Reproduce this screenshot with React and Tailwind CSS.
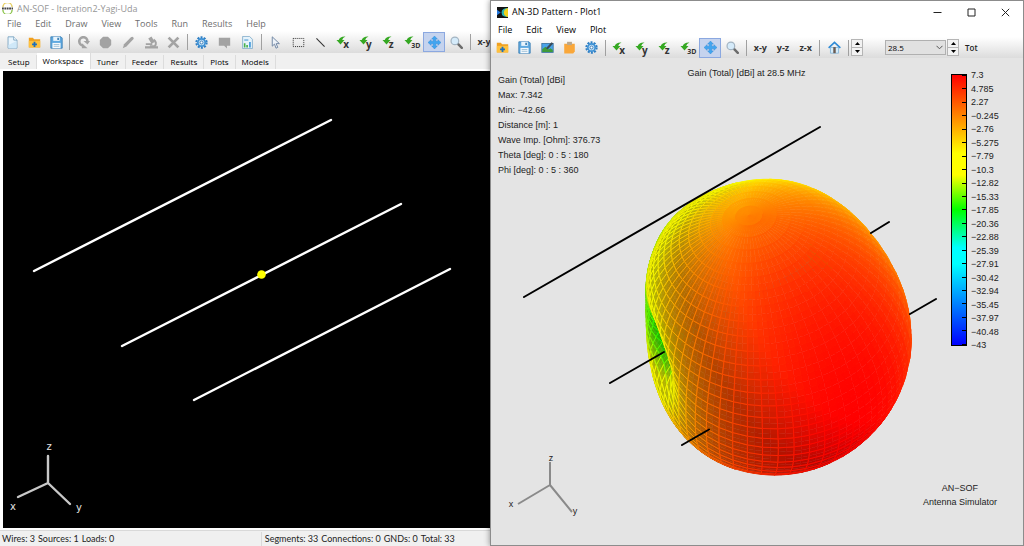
import { useMemo, useState } from "react";
import clsx from "clsx";

const LEFT_MENU = ["File", "Edit", "Draw", "View", "Tools", "Run", "Results", "Help"];
const RIGHT_MENU = ["File", "Edit", "View", "Plot"];
const TABS = ["Setup", "Workspace", "Tuner", "Feeder", "Results", "Plots", "Models"];

const INFO = [
  "Gain (Total) [dBi]",
  "Max: 7.342",
  "Min: −42.66",
  "Distance [m]: 1",
  "Wave Imp. [Ohm]: 376.73",
  "Theta [deg]: 0 : 5 : 180",
  "Phi [deg]: 0 : 5 : 360",
];

const SCALE = [
  "7.3", "4.785", "2.27", "−0.245", "−2.76", "−5.275", "−7.79", "−10.3", "−12.82", "−15.33", "−17.85",
  "−20.36", "−22.88", "−25.39", "−27.91", "−30.42", "−32.94", "−35.45", "−37.97", "−40.48", "−43",
];

/* ---------- radiation pattern ---------- */

const G_MAX = 7.342;
const G_MIN = -43;
const RADIUS = 184;
const ORIGIN = [749, 300];
const RIGHT = [-0.825, 0.566, 0];
const DOWN = [0.476, 0.694, -0.54];
const VIEW = [0.306, 0.446, 0.841];
const LIGHT = [0.7, -0.38, 0.6];

// amplitude, phase (deg) and position (deg along the boom) of each element
const ELEMENTS = [
  [0.45, 112, -70],
  [1, 0, 0],
  [0.45, -112, 54],
];

const STOPS = [
  [0, [255, 0, 0]],
  [0.29, [255, 255, 0]],
  [0.37, [255, 255, 0]],
  [0.5, [0, 255, 0]],
  [0.64, [0, 255, 255]],
  [0.7, [0, 255, 255]],
  [1, [0, 0, 255]],
];

const dot = (a, b) => a[0] * b[0] + a[1] * b[1] + a[2] * b[2];
const rad = (deg) => (deg * Math.PI) / 180;

function field(u) {
  let re = 0;
  let im = 0;
  ELEMENTS.forEach(([amp, phase, pos]) => {
    const a = rad(phase + pos * u[1]);
    re += amp * Math.cos(a);
    im += amp * Math.sin(a);
  });
  const sin = Math.sqrt(Math.max(1e-9, 1 - u[0] * u[0]));
  return Math.hypot(re, im) * Math.abs(Math.cos((Math.PI / 2) * u[0]) / sin);
}

function colorOf(gain) {
  const t = Math.min(1, Math.max(0, (G_MAX - gain) / (G_MAX - G_MIN)));
  const i = Math.max(1, STOPS.findIndex(([s]) => s >= t));
  const [t0, c0] = STOPS[i - 1];
  const [t1, c1] = STOPS[i];
  const f = (t - t0) / (t1 - t0);
  return c0.map((c, k) => c + (c1[k] - c) * f);
}

const css = (c, shade = 1) => `rgb(${c.map((v) => Math.round(v * shade)).join(",")})`;

const toPoints = (quad) =>
  quad.map((v) => `${(ORIGIN[0] + v.x).toFixed(1)},${(ORIGIN[1] + v.y).toFixed(1)}`).join(" ");

function makeFace(q) {
  const a = [q[2].x - q[0].x, q[2].y - q[0].y, q[2].z - q[0].z];
  const b = [q[3].x - q[1].x, q[3].y - q[1].y, q[3].z - q[1].z];
  let n = [a[1] * b[2] - a[2] * b[1], a[2] * b[0] - a[0] * b[2], a[0] * b[1] - a[1] * b[0]];
  const len = Math.hypot(...n) || 1;
  n = n.map((v) => v / len);
  const mid = ["x", "y", "z"].map((k) => q.reduce((sum, v) => sum + v[k], 0) / 4);
  if (dot(n, mid) < 0) n = n.map((v) => -v);
  const color = colorOf(q.reduce((sum, v) => sum + v.gain, 0) / 4);
  const shade = 0.7 + 0.3 * Math.min(1, Math.max(0, dot(n, LIGHT) / 0.45));
  return { facing: n[2], depth: mid[2], points: toPoints(q), fill: css(color, shade), line: css(color) };
}

// The surface is sampled every 2.5 degrees and the mesh is drawn every 5.
function buildPattern() {
  const peak = field([0, 1, 0]);
  const grid = [];
  for (let t = 0; t <= 72; t++) {
    const row = [];
    for (let p = 0; p <= 144; p++) {
      const th = rad(t * 2.5);
      const ph = rad(p * 2.5);
      const u = [Math.sin(th) * Math.cos(ph), Math.sin(th) * Math.sin(ph), Math.cos(th)];
      const gain = Math.max(G_MIN, G_MAX + 20 * Math.log10(field(u) / peak + 1e-9));
      const r = (RADIUS * (gain - G_MIN)) / (G_MAX - G_MIN);
      row.push({ gain, x: r * dot(u, RIGHT), y: r * dot(u, DOWN), z: r * dot(u, VIEW) });
    }
    grid.push(row);
  }

  const quad = (t, p, s) => [grid[t][p], grid[t + s][p], grid[t + s][p + s], grid[t][p + s]];
  const cells = [];
  for (let t = 0; t < 72; t += 2) {
    for (let p = 0; p < 144; p += 2) {
      const cell = makeFace(quad(t, p, 2));
      if (cell.facing < 0) continue;
      const parts = [
        [t, p],
        [t + 1, p],
        [t + 1, p + 1],
        [t, p + 1],
      ].map(([i, j]) => makeFace(quad(i, j, 1)));
      cells.push({ ...cell, id: `${t}-${p}`, parts });
    }
  }
  return cells.sort((a, b) => a.depth - b.depth);
}

/* ---------- icons ---------- */

function Icon({ children, className }) {
  return (
    <svg viewBox="0 0 16 16" className={clsx("size-[13px]", className)} aria-hidden="true">
      {children}
    </svg>
  );
}

const NewIcon = () => (
  <Icon>
    <path d="M2.5 1h7l4 4v10h-11z" fill="#e9f5fd" stroke="#6f9dbd" />
    <path d="M9.5 1v4h4" fill="#fff" stroke="#6f9dbd" />
    <path d="M3 11l10-5v9H3z" fill="#cfe8f8" />
  </Icon>
);

const OpenIcon = () => (
  <Icon>
    <path d="M1 2h5l1.500 2H15v10H1z" fill="#f0a020" />
    <path d="M1 6h14v8H1z" fill="#ffc13d" />
    <path d="M8 7v6.500M5 10.200h6" stroke="#1c6fbd" strokeWidth="2.200" />
  </Icon>
);

const SaveIcon = () => (
  <Icon>
    <path d="M1 1h12.500L15 2.500V15H1z" fill="#5fa9e0" stroke="#397db3" />
    <path d="M4 1h8v5H4z" fill="#e8f4fc" />
    <path d="M9 2h2v3H9z" fill="#397db3" />
    <path d="M3 8.500h10V15H3z" fill="#f5f9fc" />
    <path d="M4.500 10.500h7M4.500 12.700h7" stroke="#8fb6d1" />
  </Icon>
);

const UndoIcon = () => (
  <Icon>
    <path d="M12.800 6.500A5 5 0 1 0 7.500 11.500" fill="none" stroke="#a3a3a3" strokeWidth="3.200" />
    <path d="M8 6h8l-3 4.500z" fill="#a3a3a3" />
    <path d="M6 9l7 6H6z" fill="#a3a3a3" />
  </Icon>
);

const StopIcon = () => (
  <Icon>
    <path d="M5 1h6l4 4v6l-4 4H5l-4-4V5z" fill="#a3a3a3" />
  </Icon>
);

const PencilIcon = () => (
  <Icon>
    <path d="M1 15l1.500-5L11 1.500q3-1.500 3.500 2L5.500 13z" fill="#a3a3a3" />
  </Icon>
);

const ScopeIcon = () => (
  <Icon>
    <path d="M4 3l4-2.500 4 7-4 2zM0 12.500h16v3H0zM1 9h8v2H1z" fill="#a3a3a3" />
    <path d="M10.500 4.500q5 3.500 1.500 8H6" fill="none" stroke="#a3a3a3" strokeWidth="2.400" />
  </Icon>
);

const CutIcon = () => (
  <Icon>
    <path d="M2 2l12 12M14 2L2 14" stroke="#a3a3a3" strokeWidth="3.400" />
  </Icon>
);

const GearIcon = () => (
  <Icon>
    <circle cx="8" cy="8" r="6.300" fill="none" stroke="#2f7fc4" strokeWidth="2.600" strokeDasharray="2.500 1.460" />
    <circle cx="8" cy="8" r="4.500" fill="#bfe0f7" stroke="#3b8fd4" strokeWidth="2" />
    <circle cx="8" cy="8" r="1.800" fill="#fff" stroke="#2a6dab" />
  </Icon>
);

const NoteIcon = () => (
  <Icon>
    <path d="M1 2h14v10h-4v3.500L7.500 12H1z" fill="#a3a3a3" />
  </Icon>
);

const ReportIcon = () => (
  <Icon>
    <path d="M2 .500h8.500L14 4v11.500H2z" fill="#e6f3fb" stroke="#7aa8c8" />
    <path d="M4 4h5v2H4z" fill="#7db7e0" />
    <path d="M4.500 9v5M7.500 11v3" stroke="#46b04a" strokeWidth="2" />
    <path d="M11 7.500v6.500" stroke="#3b94d9" strokeWidth="2" />
  </Icon>
);

const CursorIcon = () => (
  <Icon>
    <path d="M4 1v11.500l2.800-2.600L8.600 15l2.200-1-2-4.600h4z" fill="#eef3f9" stroke="#7288a5" strokeWidth="1.200" />
  </Icon>
);

const RectIcon = () => (
  <Icon>
    <rect x="1.500" y="3" width="13" height="10" fill="none" stroke="#333" strokeWidth="1.200" strokeDasharray="1.300 1.200" />
  </Icon>
);

const LineIcon = () => (
  <Icon>
    <path d="M3 3l10 10" stroke="#333" strokeWidth="1.300" />
  </Icon>
);

const MoveIcon = () => (
  <Icon>
    <path
      d="M8 0l3.500 3.800H9.600v2.600h2.600V4.500L16 8l-3.800 3.500V9.600H9.600v2.600h1.900L8 16l-3.500-3.800h1.900V9.600H3.800v1.900L0 8l3.800-3.500v1.900h2.600V3.800H4.500z"
      fill="#41a5f0"
      stroke="#2f86cf"
      strokeWidth=".500"
    />
  </Icon>
);

const ZoomIcon = () => (
  <Icon>
    <path d="M9.500 9.500l5 5" stroke="#6b6b6b" strokeWidth="3" strokeLinecap="round" />
    <circle cx="6" cy="6" r="4.700" fill="#d5ebfa" stroke="#a3b4c2" strokeWidth="1.500" />
  </Icon>
);

const ImageIcon = () => (
  <Icon>
    <rect x="1" y="3" width="14" height="11" fill="#4aa3e8" stroke="#3a6f9c" />
    <path d="M1.500 13.500V10l4-3 4 3.500 2-1.500 3 2v2.500z" fill="#3f9b3a" />
    <path d="M6 9l7-7.500 2 1.500-6.500 7z" fill="#3a4a58" />
  </Icon>
);

const ClipboardIcon = () => (
  <Icon>
    <path d="M1.500 3.500h13V13l-2 2.500h-11z" fill="#f9a73a" />
    <path d="M5 1h6v4H5z" fill="#b9a78c" />
  </Icon>
);

const HomeIcon = () => (
  <Icon>
    <path d="M3 8h10v7H3z" fill="#d7edfa" stroke="#7fb2d6" />
    <path d="M.800 8.500L8 1.800l7.200 6.700" fill="none" stroke="#2f8bd6" strokeWidth="2" />
    <path d="M6.500 7.500h3V15h-3z" fill="#6b5b52" />
  </Icon>
);

function RotateIcon({ axis }) {
  return (
    <span className="relative block size-[14px]">
      <svg viewBox="0 0 14 14" className="size-[14px]" aria-hidden="true">
        <path d="M4.500 9.500L.500 5h2.200Q4 1.200 9.500 1.500 6.500 2.500 6.200 5H8.500z" fill="#35a822" />
      </svg>
      <span
        className={clsx(
          "absolute left-[7px] font-bold text-[#333]",
          axis === "3D" ? "-bottom-[3px] text-[7px] leading-[12px]" : "-bottom-[2px] text-[10px] leading-[14px]",
        )}
      >
        {axis}
      </span>
    </span>
  );
}

/* ---------- window parts ---------- */

function Group({ className, items, active, onPick }) {
  return (
    <div className={clsx("flex h-full shrink-0 items-center", className)}>
      {items.map(([label, icon]) => (
        <button
          key={label}
          type="button"
          aria-label={label}
          onClick={() => onPick?.(label)}
          className={clsx(
            "flex h-5 flex-1 items-center justify-center border",
            active === label ? "border-[#8ba8e0] bg-[#c5d3ee]" : "border-transparent",
          )}
        >
          {icon}
        </button>
      ))}
    </div>
  );
}

const Separator = () => <div className="mx-[2px] h-4 w-px shrink-0 bg-[#a0a0a0]" />;

function Spinner({ label }) {
  return (
    <div className="flex h-[17px] w-3 shrink-0 flex-col border border-[#b5b5b5] bg-[#f2f2f2]">
      <button type="button" aria-label={`${label} up`} className="flex flex-1 items-center justify-center border-b border-[#b5b5b5]">
        <svg viewBox="0 0 5 3" className="h-[3px] w-[5px]"><path d="M0 3L2.500 0 5 3z" /></svg>
      </button>
      <button type="button" aria-label={`${label} down`} className="flex flex-1 items-center justify-center">
        <svg viewBox="0 0 5 3" className="h-[3px] w-[5px]"><path d="M0 0l2.500 3L5 0z" /></svg>
      </button>
    </div>
  );
}

function MenuBar({ items, className }) {
  return (
    <nav className={clsx("flex items-center gap-[14px] px-[7px]", className)}>
      {items.map((item) => (
        <button key={item} type="button">
          {item}
        </button>
      ))}
    </nav>
  );
}

const planeButton = (text) => [text, <span className="text-[9px] font-bold text-[#333]">{text}</span>];
const rotateButtons = ["x", "y", "z", "3D"].map((axis) => [`Rotate ${axis}`, <RotateIcon axis={axis} />]);

function MainWindow() {
  const [tab, setTab] = useState("Workspace");
  const [tool, setTool] = useState("Move");

  return (
    <section className="flex min-w-0 flex-col overflow-hidden bg-white">
      <header className="flex h-[17px] shrink-0 items-center gap-1 pl-[2px] text-[9px] text-[#969696]">
        <svg viewBox="0 0 12 12" className="size-[11px]" aria-hidden="true">
          <path d="M1 4.500a5 5 0 0 1 10 0" fill="none" stroke="#e6cf62" strokeWidth="1.500" />
          <path d="M1 7.500a5 5 0 0 0 10 0" fill="none" stroke="#8bc34a" strokeWidth="1.500" />
          <path d="M0 6h12" stroke="#444" strokeWidth="2" strokeDasharray="2 .600" />
        </svg>
        <h1>AN-SOF - Iteration2-Yagi-Uda</h1>
      </header>
      <MenuBar items={LEFT_MENU} className="h-[14px] shrink-0 text-[#6d6d6d]" />

      <div className="flex h-[22px] shrink-0 items-center bg-linear-to-b from-white to-[#dcdcdc] pl-px">
        <Group className="w-[66px]" items={[["New", <NewIcon />], ["Open", <OpenIcon />], ["Save", <SaveIcon />]]} />
        <Separator />
        <Group
          className="w-[113px]"
          items={[
            ["Undo", <UndoIcon />],
            ["Stop", <StopIcon />],
            ["Edit wire", <PencilIcon />],
            ["Inspect", <ScopeIcon />],
            ["Delete", <CutIcon />],
          ]}
        />
        <Separator />
        <Group className="w-[69px]" items={[["Settings", <GearIcon />], ["Notes", <NoteIcon />], ["Report", <ReportIcon />]]} />
        <Separator />
        <Group
          className="w-[204px]"
          active={tool}
          onPick={setTool}
          items={[
            ["Select", <CursorIcon />],
            ["Select area", <RectIcon />],
            ["Line", <LineIcon />],
            ...rotateButtons,
            ["Move", <MoveIcon />],
            ["Zoom", <ZoomIcon />],
          ]}
        />
        <Separator />
        <Group className="w-[22px]" items={[planeButton("x-y")]} />
      </div>

      <div role="tablist" className="flex h-[16px] shrink-0 items-end bg-[#f0f0f0] pl-[2px]">
        {TABS.map((name) => (
          <button
            key={name}
            type="button"
            role="tab"
            aria-selected={tab === name}
            onClick={() => setTab(name)}
            className={clsx(
              "shrink-0 border-r border-[#dcdcdc] px-[6px] text-[8px] font-medium text-black",
              tab === name ? "h-4 bg-white" : "h-[14px]",
            )}
          >
            {name}
          </button>
        ))}
      </div>

      <div className="flex min-h-0 flex-1 border-y-2 border-l-[3px] border-white bg-black">
        <svg viewBox="3 71 487 457" className="h-full w-full bg-black">
          <g stroke="#fff" strokeWidth="2.400" strokeLinecap="round">
            <path d="M34 271L331 120M122 346L401 204M194 400L450 269" />
          </g>
          <circle cx="261.500" cy="274.500" r="4.300" fill="#ffff00" />
          <path d="M48 456v27M48 483l-30 14M48 483l22 21" fill="none" stroke="#c8c8c8" strokeWidth="2.400" strokeLinecap="round" />
          <g fill="#e4e4e4" className="font-['DejaVu_Sans'] text-[10px]" textAnchor="middle">
            <text x="49" y="450">z</text>
            <text x="13" y="510">x</text>
            <text x="79" y="511">y</text>
          </g>
        </svg>
      </div>

      <footer className="flex h-4 shrink-0 items-center border-t border-[#d9d9d9] bg-[#f0f0f0] font-['Lato'] text-[9px] text-[#222]">
        <div className="flex flex-[262] gap-[3px] pl-[2px] whitespace-nowrap">
          <span>Wires: 3</span>
          <span>Sources: 1</span>
          <span>Loads: 0</span>
        </div>
        <div className="flex flex-[228] gap-[3px] border-l border-[#d9d9d9] pl-[3px] whitespace-nowrap">
          <span>Segments: 33</span>
          <span>Connections: 0</span>
          <span>GNDs: 0</span>
          <span>Total: 33</span>
        </div>
      </footer>
    </section>
  );
}

function PatternPlot() {
  const cells = useMemo(buildPattern, []);

  return (
    <svg viewBox="491 58 532 487" className="absolute inset-0 h-full w-full" role="img" aria-label="Gain pattern">
      <g strokeLinejoin="round">
        {cells.map((cell) => (
          <g key={cell.id}>
            {cell.parts.map((part, i) => (
              <polygon key={i} points={part.points} fill={part.fill} stroke={part.fill} strokeWidth=".500" />
            ))}
            <polygon points={cell.points} fill="none" stroke={cell.line} strokeWidth=".900" />
          </g>
        ))}
      </g>
      <path
        d="M524 297L820 127M610 383l54-31M871 233l18-11M682 445l27-15.500M910 314l26-15"
        stroke="#000"
        strokeWidth="2"
        strokeLinecap="round"
      />
      <path d="M550 462v23M550 485l-32 19M550 485l22 27" fill="none" stroke="#8a8a8a" strokeWidth="2" />
      <g fill="#222" className="font-['Liberation_Sans'] text-[9px]" textAnchor="middle">
        <text x="551" y="461">z</text>
        <text x="511" y="507">x</text>
        <text x="575" y="514">y</text>
      </g>
    </svg>
  );
}

function PatternWindow() {
  const [tool, setTool] = useState("Move");

  return (
    <section className="relative flex min-w-0 flex-col border border-[#8c8c8c] bg-white shadow-[0_0_6px_rgba(0,0,0,0.45)]">
      <header className="flex h-[22px] shrink-0 items-center pl-[6px] text-[9px] text-black">
        <svg viewBox="0 0 12 12" className="mr-1 size-[11px]" aria-hidden="true">
          <rect width="12" height="12" fill="#111" />
          <path d="M0 3l4 3-4 3z" fill="#2277dd" />
          <path d="M12 1v10Q5 11 5 6t7-5z" fill="#28b4b4" />
          <path d="M12 1v10Q7.500 10 7.500 6T12 1z" fill="#f2d21b" />
        </svg>
        <h2 className="flex-1">AN-3D Pattern - Plot1</h2>
        <div className="flex items-center gap-[25px] pr-[13px]">
          <button type="button" aria-label="Minimize">
            <svg viewBox="0 0 9 9" className="size-[9px]"><path d="M.500 4.500h8" stroke="#222" /></svg>
          </button>
          <button type="button" aria-label="Maximize">
            <svg viewBox="0 0 9 9" className="size-[9px]"><path d="M1 1h7v7H1z" fill="none" stroke="#222" /></svg>
          </button>
          <button type="button" aria-label="Close">
            <svg viewBox="0 0 9 9" className="size-[9px]"><path d="M.800.800l7.400 7.400M8.200.800L.800 8.200" stroke="#222" /></svg>
          </button>
        </div>
      </header>
      <MenuBar items={RIGHT_MENU} className="h-[14px] shrink-0 text-black" />

      <div className="flex h-[21px] shrink-0 items-center bg-linear-to-b from-white to-[#dcdcdc]">
        <Group
          className="w-[112px]"
          items={[
            ["Open", <OpenIcon />],
            ["Save", <SaveIcon />],
            ["Export image", <ImageIcon />],
            ["Copy", <ClipboardIcon />],
            ["Settings", <GearIcon />],
          ]}
        />
        <Separator />
        <Group
          className="w-[136px]"
          active={tool}
          onPick={setTool}
          items={[...rotateButtons, ["Move", <MoveIcon />], ["Zoom", <ZoomIcon />]]}
        />
        <Separator />
        <Group className="w-[68px]" items={["x-y", "y-z", "z-x"].map(planeButton)} />
        <Separator />
        <Group className="w-6" items={[["Home", <HomeIcon />]]} />
        <Separator />
        <Spinner label="Size" />
        <div className="relative ml-[22px] shrink-0">
          <select
            aria-label="Frequency"
            className="block h-[15px] w-[61px] appearance-none border border-[#b0b0b0] bg-[#e1e1e1] pl-[2px] text-[8px] leading-[13px] text-black"
          >
            <option>28.5</option>
          </select>
          <svg viewBox="0 0 7 5" className="pointer-events-none absolute top-[5px] right-[3px] h-[5px] w-[7px]">
            <path d="M.500.800l3 3 3-3" fill="none" stroke="#555" />
          </svg>
        </div>
        <div className="ml-px">
          <Spinner label="Frequency" />
        </div>
        <span className="ml-[6px] text-[8px] font-semibold text-[#222]">Tot</span>
      </div>

      <div className="relative flex min-h-0 flex-1 flex-col justify-between bg-[#e4e4e4] font-['Liberation_Sans',sans-serif] text-[9px] text-[#222]">
        <PatternPlot />
        <div className="relative flex items-start pl-[7px]">
          <ul className="flex-1 pt-[15px] leading-[15px]">
            {INFO.map((line) => (
              <li key={line}>{line}</li>
            ))}
          </ul>
          <h3 className="pt-2 pr-7 leading-[15px]">Gain (Total) [dBi] at 28.5 MHz</h3>
          <div className="flex flex-1 justify-end pt-4">
            <div className="relative mr-[4px] h-[272px] w-4 border border-black bg-[linear-gradient(to_bottom,#f00_0%,#ff0_29%,#ff0_37%,#0f0_50%,#0ff_64%,#0ff_70%,#00f_100%)]">
              <div className="absolute inset-y-0 right-0 flex w-1 flex-col justify-between">
                {SCALE.map((value) => (
                  <div key={value} className="h-px bg-black" />
                ))}
              </div>
            </div>
            <ol className="-mt-1 flex h-[280px] w-[52px] flex-col justify-between leading-[10px]">
              {SCALE.map((value) => (
                <li key={value}>{value}</li>
              ))}
            </ol>
          </div>
        </div>
        <div className="relative self-end pr-[26px] pb-9 text-center leading-[14px]">
          <p>AN−SOF</p>
          <p>Antenna Simulator</p>
        </div>
      </div>
    </section>
  );
}

export default function App() {
  return (
    <main className="grid h-screen grid-cols-[490fr_534fr] overflow-hidden bg-white font-['Open_Sans',sans-serif] text-[9px] leading-[14px]">
      <MainWindow />
      <PatternWindow />
    </main>
  );
}
